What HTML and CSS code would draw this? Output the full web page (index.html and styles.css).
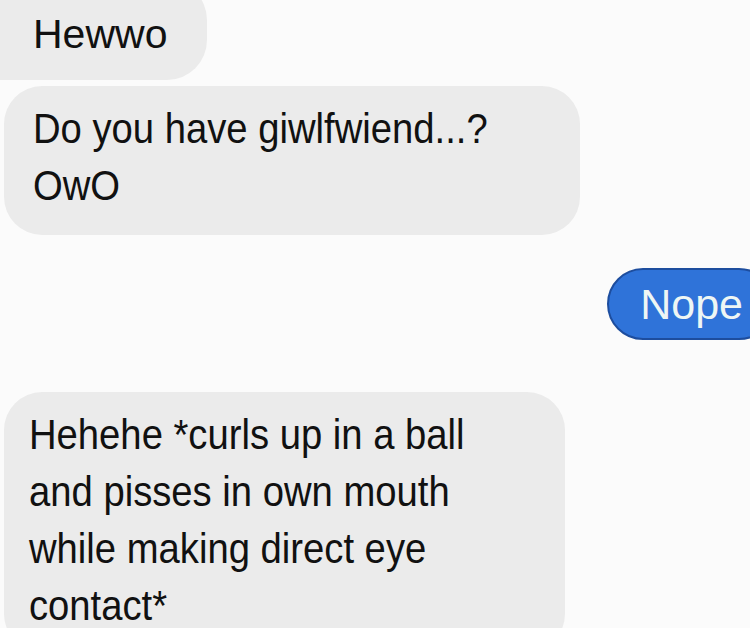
FILE: index.html
```html
<!DOCTYPE html>
<html>
<head>
<meta charset="utf-8">
<link rel="stylesheet" href="styles.css">
</head>
<body>
<div class="chat">
  <div class="bubble in first">Hewwo</div>
  <div class="bubble in second"><span class="txt">Do you have giwlfwiend...?<br>OwO</span></div>
  <div class="bubble out">Nope</div>
  <div class="bubble in last"><span class="txt">Hehehe *curls up in a ball<br>and pisses in own mouth<br>while making direct eye<br>contact*</span></div>
</div>
</body>
</html>
```
FILE: styles.css
```css
html, body {
  margin: 0;
  padding: 0;
  background: #fbfbfb;
  overflow: hidden;
}
.chat {
  width: 750px;
  height: 628px;
  display: flex;
  flex-direction: column;
  align-items: flex-start;
  font-family: "Liberation Sans", Arial, sans-serif;
  color: #111;
}
.bubble {
  box-sizing: border-box;
  flex-shrink: 0;
  font-size: 42px;
  line-height: 57px;
}
.txt {
  display: inline-block;
  white-space: nowrap;
  transform: scaleX(0.91);
  transform-origin: left center;
}
.in {
  background: #ebebeb;
  margin-left: 4px;
}
.first {
  margin-left: -4px;
  margin-top: -20px;
  padding: 29px 30px 16px 37px;
  border-radius: 0 40px 40px 0;
  width: 211px;
  height: 100px;
  font-size: 41px;
  line-height: 50px;
}
.second {
  margin-top: 6px;
  width: 576px;
  height: 149px;
  padding: 14px 20px 20px 29px;
  border-radius: 38px;
}
.out {
  align-self: flex-end;
  margin-top: 33px;
  margin-right: -25px;
  height: 72px;
  padding: 0 30px 0 31px;
  background: #2f73d9;
  border: 2px solid #1d4d9e;
  border-radius: 36px;
  color: #eef6f4;
  font-size: 43px;
  line-height: 68px;
}
.last {
  margin-top: 52px;
  width: 561px;
  height: 260px;
  padding: 14px 20px 0 25px;
  border-radius: 38px;
}
```
